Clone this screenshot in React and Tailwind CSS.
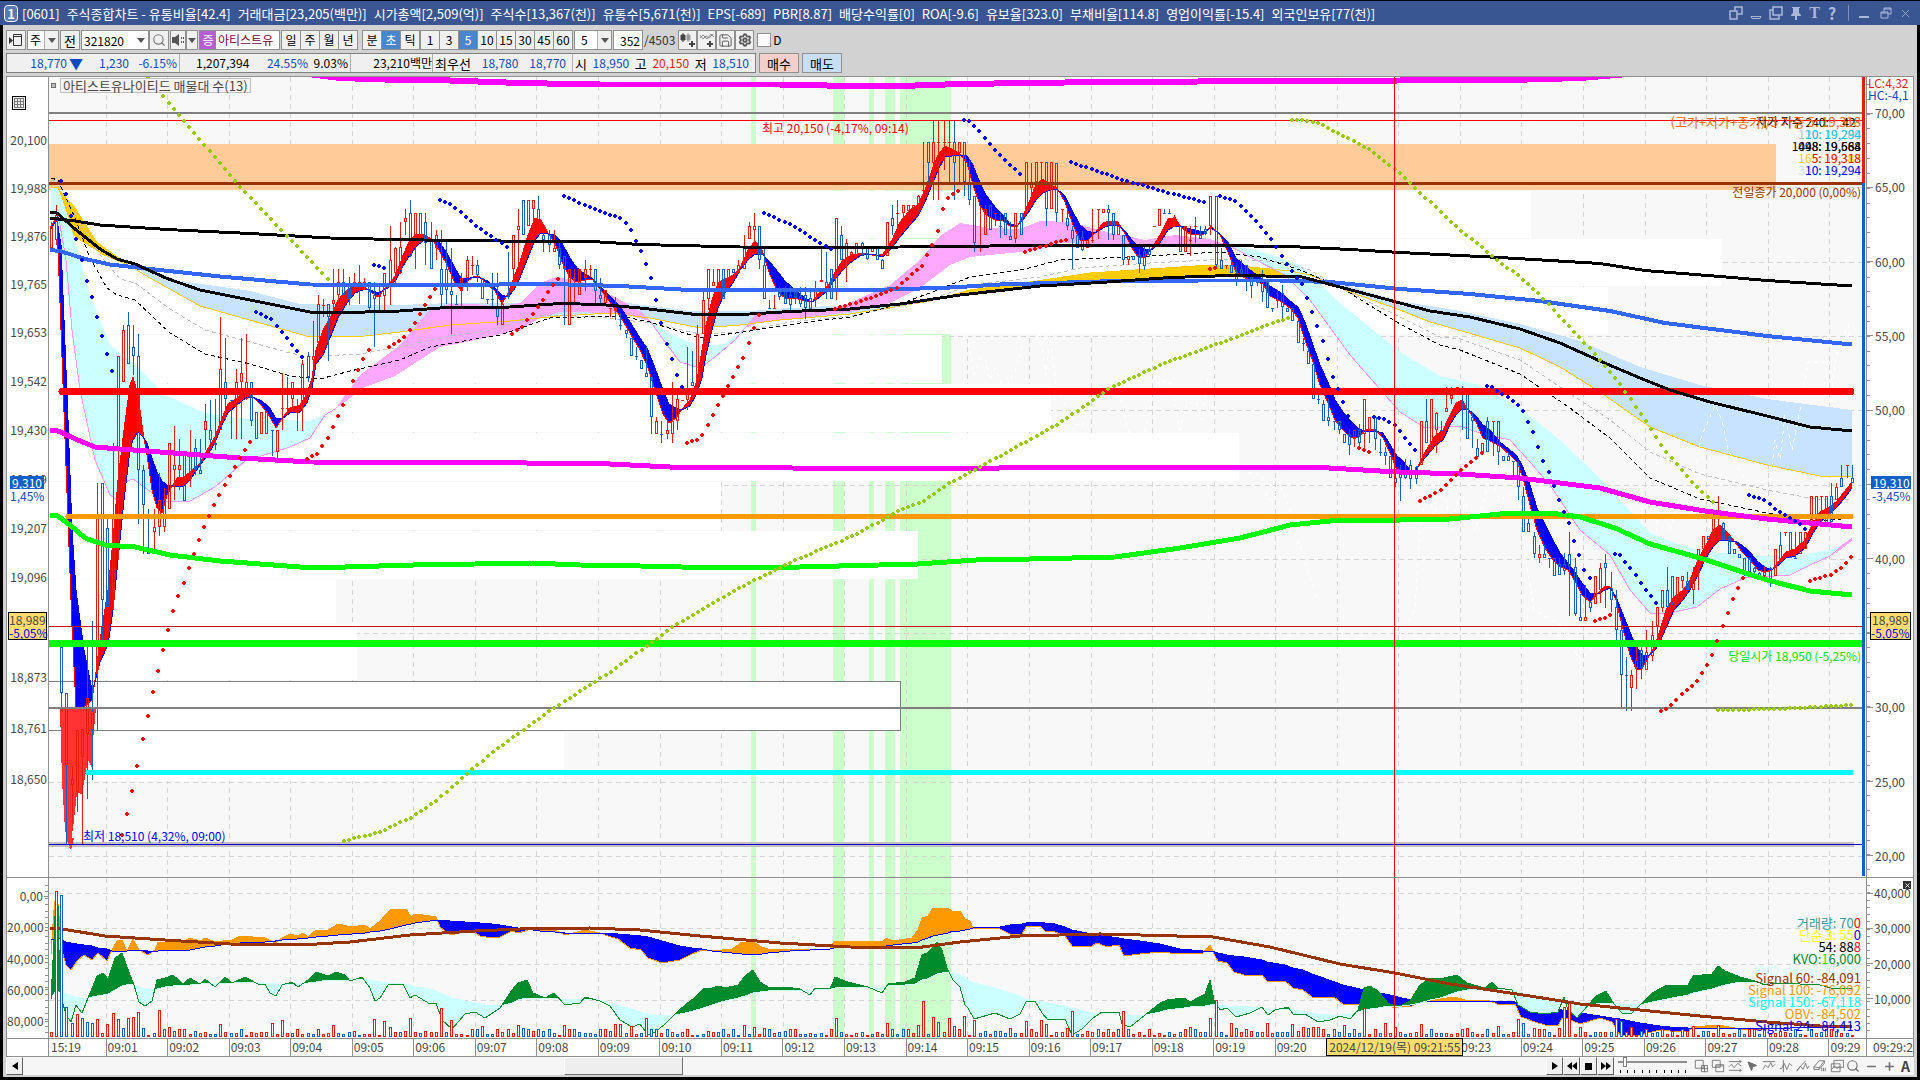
import React, { useState } from "react";
import {
  Search,
  Save,
  Settings,
  Pin,
  Minus,
  Plus,
  X,
  MousePointer2,
} from "lucide-react";

// ---------- data ----------

const stats = [
  "주식종합차트 - 유통비율[42.4]",
  "거래대금[23,205(백만)]",
  "시가총액[2,509(억)]",
  "주식수[13,367(천)]",
  "유통수[5,671(천)]",
  "EPS[-689]",
  "PBR[8.87]",
  "배당수익률[0]",
  "ROA[-9.6]",
  "유보율[323.0]",
  "부채비율[114.8]",
  "영업이익률[-15.4]",
  "외국인보유[77(천)]",
];

// rows get taller towards the low prices
const priceLabels = [
  ["20,100", "grow-[48]"], ["19,988", "grow-[48]"], ["19,876", "grow-[48]"], ["19,765", "grow-[48]"],
  ["19,653", "grow-[49]"], ["19,542", "grow-[49]"], ["19,430", "grow-[49]"], ["19,319", "grow-[49]"],
  ["19,207", "grow-[49]"], ["19,096", "grow-[50]"], ["", "grow-[50]"], ["18,873", "grow-[51]"],
  ["18,761", "grow-[51]"],
];
const indexLabels = [
  "70,00", "65,00", "60,00", "55,00", "50,00", "", "40,00", "", "30,00",
  "25,00", "20,00",
];
const obvLabels = ["0,00", "20,000", "40,000", "60,000", "80,000"];
const volLabels = ["40,000", "30,000", "20,000", "10,000"];
const minutes = Array.from(
  { length: 28 },
  (_, i) => "09:" + String(i + 1).padStart(2, "0")
);

const FIRST_X = 51;
const STEP = 5.13;
const BARS = 352;
const MINUTE = 61.564;

// price zones [x2, y1, y2]
const zones = [
  [1531, 191, 238], [1722, 239, 286], [1608, 287, 334], [942, 335, 383],
  [1051, 384, 432], [1239, 433, 481], [721, 482, 530], [918, 531, 579],
  [336, 580, 623], [357, 624, 680], [564, 732, 781],
];

const stripes = [
  [751, 5], [833, 11], [869, 5], [885, 10], [900, 51],
];

// short moving averages [x, fast, slow]
const ribbon = [
  [51,229,229],[55,218,222],[57,222,220],[61,330,245],[68,520,420],[72,626,530],[76,707,590],[84,707,650],[92,700,690],
  [95,680,682],[100,640,662],[108,590,645],[113,540,610],[118,480,560],[124,430,500],[130,385,450],[133,377,440],
  [138,395,432],[143,432,437],[147,455,443],[152,490,458],[157,508,472],[162,513,481],[167,495,485],[173,485,486],
  [178,477,486],[184,477,486],[190,472,480],[200,463,465],[207,450,456],[215,437,443],[222,418,425],[228,404,413],
  [237,398,405],[247,390,397],[252,396,397],[262,406,401],[270,417,408],[276,428,419],[283,417,418],[290,408,413],
  [300,405,412],[307,394,403],[312,378,388],[316,350,364],[323,330,355],[330,318,338],[338,300,318],[347,290,303],
  [355,286,293],[363,286,290],[368,290,289],[378,297,293],[388,285,288],[396,275,280],[403,255,266],[410,240,255],
  [417,234,246],[424,235,240],[433,240,240],[440,252,243],[447,265,253],[455,283,268],[461,290,278],[467,282,279],
  [474,276,277],[480,277,278],[488,285,281],[495,291,288],[502,304,295],[508,293,297],[514,277,290],[520,262,278],
  [527,238,260],[535,218,240],[541,220,233],[548,233,234],[555,243,235],[562,262,243],[570,278,258],[577,282,268],
  [585,280,274],[592,279,278],[600,289,286],[610,302,296],[620,316,306],[630,333,322],[640,350,338],[647,365,348],
  [655,390,368],[663,414,390],[669,423,404],[676,418,408],[682,409,410],[690,400,406],[697,380,393],[702,350,378],
  [706,325,355],[712,300,330],[718,283,308],[725,279,293],[733,275,283],[740,268,270],[748,250,260],[755,241,254],
  [762,250,254],[770,275,262],[778,292,272],[785,298,281],[795,298,290],[805,301,298],[812,302,302],[820,292,297],
  [828,286,290],[835,272,279],[843,260,270],[850,256,263],[860,253,256],[868,254,254],[876,256,255],[883,254,257],
  [892,240,248],[900,222,237],[910,210,225],[918,205,216],[925,190,202],[932,170,185],[938,155,170],[945,146,157],
  [952,149,156],[960,154,155],[967,163,156],[973,185,165],[980,205,183],[986,215,195],[995,220,207],[1003,221,215],
  [1010,226,224],[1017,227,226],[1023,215,220],[1030,200,210],[1036,184,200],[1043,179,193],[1050,185,190],
  [1057,188,189],[1065,202,196],[1073,225,212],[1080,240,225],[1087,241,231],[1095,233,233],[1103,223,228],
  [1110,221,225],[1118,222,225],[1125,234,231],[1132,248,240],[1138,257,246],[1145,257,249],[1150,251,251],
  [1160,235,243],[1168,219,230],[1175,218,226],[1182,228,226],[1190,234,229],[1204,234,232],[1211,226,228],
  [1220,235,234],[1228,252,242],[1236,272,258],[1245,278,266],[1253,281,272],[1263,284,280],[1270,296,286],
  [1280,301,292],[1290,308,301],[1298,318,307],[1305,340,322],[1313,362,345],[1320,385,365],[1328,403,382],
  [1335,420,400],[1343,430,412],[1350,437,420],[1358,438,428],[1365,430,432],[1375,429,431],[1383,438,433],
  [1391,455,446],[1397,470,456],[1404,474,462],[1410,475,470],[1416,470,470],[1425,452,458],[1435,436,446],
  [1443,430,440],[1450,415,425],[1456,403,415],[1462,400,409],[1469,411,410],[1476,422,416],[1483,438,425],
  [1490,441,430],[1500,446,442],[1510,455,450],[1517,462,456],[1523,478,467],[1530,505,485],[1537,530,508],
  [1545,548,524],[1553,560,540],[1560,567,553],[1568,570,563],[1575,581,572],[1582,595,583],[1590,602,593],
  [1598,593,594],[1605,586,590],[1610,587,588],[1616,600,597],[1622,625,612],[1630,655,632],[1636,669,646],
  [1642,669,655],[1648,658,656],[1655,645,650],[1660,630,642],[1666,610,628],[1674,597,610],[1683,590,600],
  [1690,580,590],[1698,560,575],[1706,545,558],[1713,530,547],[1720,525,540],[1728,533,541],[1735,542,541],
  [1742,552,545],[1750,560,552],[1758,570,562],[1765,572,567],[1772,570,570],[1780,560,564],[1786,552,558],
  [1795,549,556],[1805,540,548],[1812,525,535],[1820,512,522],[1828,508,516],[1836,502,508],[1844,492,499],[1852,482,488],
];

// candles read one by one [x, high, top, bottom, low, up]
const knownCandles = [
  [51,222,226,248,252,1],[56,205,215,240,245,1],[61,647,647,693,712,0],[66,693,693,766,845,0],[71,766,779,785,826,1],[76,730,730,792,812,1],[81,730,729,757,844,1],
  [87,640,698,734,799,1],[92,621,711,730,780,0],[97,483,518,670,730,1],[102,483,483,600,640,0],[107,518,528,607,640,0],
  [112,443,518,600,610,1],[117,356,356,448,560,1],[122,325,330,382,382,1],[128,312,325,364,364,0],[133,325,347,356,375,0],
  [138,334,356,470,524,0],[143,465,470,505,554,0],[148,509,549,554,554,0],[153,509,527,532,549,1],[158,473,500,527,536,1],
  [163,488,500,527,532,1],[168,443,443,509,509,1],[174,426,465,470,500,1],[179,439,465,470,490,1],[184,452,452,501,501,0],
  [189,430,452,479,487,1],[194,439,448,470,475,0],[199,439,470,474,474,0],[204,404,421,430,450,1],[210,400,430,440,443,0],
  [215,399,443,445,450,0],[220,317,369,430,430,1],[225,338,382,399,420,0],[230,400,400,400,439,0],[235,369,382,399,439,1],
  [240,338,373,382,439,1],[245,334,382,399,400,1],[251,382,382,421,426,0],[256,412,412,439,439,0],[261,412,412,434,434,1],
  [266,412,412,434,434,1],[271,430,430,430,456,0],[276,430,430,452,462,1],[281,373,408,408,430,1],[286,377,408,408,410,1],
  [292,382,382,399,412,1],[297,399,412,412,431,1],[302,360,364,408,431,1],[307,352,356,377,382,0],[312,321,356,360,369,1],
  [317,295,304,343,360,1],[322,299,305,305,317,1],[328,304,304,317,361,0],[333,269,300,304,310,1],[338,269,282,295,308,1],
  [343,269,282,295,299,0],[348,277,286,299,305,0],[353,273,282,286,290,1],[358,265,282,286,304,1],[363,278,282,285,290,1],
  [369,282,282,308,312,0],[374,282,295,299,347,0],[379,286,295,297,313,1],[384,273,273,296,313,1],[389,226,260,282,305,1],
  [394,247,248,273,287,1],[399,222,247,273,274,1],[404,209,218,222,235,1],[410,200,213,256,257,0],[415,213,213,235,269,1],
  [420,213,213,243,243,0],[425,213,222,243,265,0],[430,222,239,269,269,0],[435,230,235,248,260,1],[440,230,269,295,308,0],
  [445,239,269,290,304,0],[451,248,291,295,334,0],[456,295,304,304,305,0],[461,273,278,291,308,1],[466,256,260,278,291,1],
  [471,256,265,265,275,1],[476,260,265,275,282,0],[481,278,278,299,299,0],[486,299,299,299,304,0],[491,273,299,299,308,0],
  [497,273,308,317,325,0],[502,300,304,325,325,1],[507,252,295,297,299,0],[512,235,235,269,291,1],[517,209,226,230,269,1],
  [522,200,200,235,235,0],[528,200,200,226,226,1],[533,200,200,209,230,1],[538,196,209,235,235,0],[543,230,235,240,252,0],
  [548,230,235,245,252,0],[553,230,248,252,252,1],[558,243,248,265,269,0],[564,256,256,269,325,0],[569,269,269,325,325,1],
  [574,269,278,278,304,1],[579,269,269,295,295,1],[584,260,269,278,291,1],[589,265,269,269,278,1],[594,269,269,291,304,0],
  [599,278,295,299,304,0],[605,290,290,303,303,1],[610,308,308,308,317,1],[615,297,308,311,320,1],[620,313,325,325,330,0],
  [625,330,330,334,338,0],[630,338,338,356,356,0],[635,347,356,356,360,0],[640,360,360,369,369,0],[646,347,373,377,377,0],
  [651,377,377,417,434,0],[656,417,421,434,434,1],[661,421,434,434,443,0],[666,421,430,434,439,1],[671,382,421,434,443,1],
  [676,395,399,421,430,1],[681,400,400,400,400,1],[687,347,390,400,410,1],[692,351,382,386,386,0],[697,325,334,380,380,1],
  [702,291,300,334,334,1],[707,269,269,299,310,1],[712,269,282,286,286,1],[717,269,269,286,286,1],[723,269,269,299,299,0],
  [728,269,269,278,278,1],[733,269,269,273,273,0],[738,260,265,273,273,1],[743,235,248,269,269,1],[748,222,226,239,239,1],
  [753,213,226,230,243,1],[758,226,226,260,269,0],[764,248,265,299,299,0],[769,300,308,308,309,0],[774,295,308,308,309,1],
  [784,286,290,304,304,0],[820,247,280,282,282,1],[825,252,282,290,299,0],[830,269,269,299,299,0],[835,218,218,290,300,1],
  [841,226,235,260,260,0],[846,239,243,260,282,1],[856,243,243,256,256,1],[861,242,243,248,256,0],[866,248,248,259,260,0],
  [872,248,248,252,252,1],[877,248,248,260,260,0],[882,259,260,269,269,0],[887,222,222,256,256,1],[892,205,218,226,235,0],
  [897,200,213,213,226,1],[902,205,205,213,218,1],[907,205,205,211,218,1],[912,205,205,209,209,1],[917,195,196,205,213,1],
  [923,142,190,190,200,1],[928,142,142,163,183,0],[933,121,142,163,200,1],[938,121,142,142,200,1],[943,121,142,142,170,1],
  [948,121,142,142,182,1],[953,121,142,163,200,0],[959,142,142,153,182,1],[964,142,142,182,196,0],[969,160,182,200,205,0],
  [974,196,196,243,252,0],[979,205,205,205,252,1],[984,205,209,235,235,1],[989,205,205,230,230,0],[994,213,213,213,226,1],
  [1000,213,226,226,238,0],[1005,213,213,235,235,0],[1010,222,236,240,240,0],[1015,213,213,239,243,1],[1020,213,213,235,235,0],
  [1025,162,162,212,212,1],[1030,163,183,188,200,1],[1035,162,162,182,196,1],[1041,162,162,162,190,1],[1046,162,162,209,226,0],
  [1051,162,162,209,209,1],[1056,163,163,213,222,0],[1061,209,209,209,222,1],[1066,209,218,226,230,0],[1071,226,230,239,269,0],
  [1076,235,235,248,248,0],[1087,240,240,248,248,1],[1092,209,240,240,243,1],[1097,209,209,209,239,1],[1102,209,209,213,213,1],
  [1107,205,209,213,240,0],[1112,213,213,235,240,0],[1118,226,226,235,235,1],[1123,235,235,260,265,0],[1128,256,256,260,265,1],
  [1133,256,256,260,260,0],[1153,226,226,226,226,1],[1159,209,209,226,226,1],[1164,209,213,213,213,0],[1169,209,213,213,213,0],
  [1179,226,226,252,252,0],[1184,226,226,252,252,1],[1189,226,240,240,256,1],[1194,217,226,226,243,1],[1200,226,235,239,239,0],
  [1210,196,196,226,235,1],[1215,196,196,265,269,0],[1220,248,260,269,269,0],[1225,265,265,265,269,1],[1231,260,265,273,273,0],
  [1236,265,273,282,286,0],[1246,265,265,282,291,0],[1256,282,282,282,286,0],[1266,282,282,308,308,0],[1271,308,308,308,312,0],
  [1277,291,300,300,308,1],[1287,308,308,312,312,0],[1292,308,308,321,321,0],[1297,321,321,343,343,0],[1302,338,343,343,351,0],
  [1307,347,351,364,364,0],[1313,364,364,399,399,0],[1318,390,399,399,404,0],[1323,400,404,421,421,0],[1328,399,417,421,426,0],
  [1333,421,421,421,430,0],[1338,421,421,430,434,0],[1343,434,434,443,443,0],[1354,430,430,439,447,1],[1364,399,399,434,452,1],
  [1369,417,417,430,443,1],[1374,417,417,439,450,0],[1379,439,452,452,456,0],[1384,447,452,456,465,0],[1389,456,456,478,478,0],
  [1395,474,478,483,487,0],[1400,465,470,478,501,0],[1420,421,421,465,465,1],[1425,399,421,443,443,0],[1430,399,399,450,450,1],
  [1436,412,413,430,453,1],[1441,421,430,430,440,0],[1446,387,408,412,412,1],[1451,387,395,399,404,1],[1456,387,387,395,395,1],
  [1461,386,390,392,430,0],[1466,393,393,439,439,0],[1471,412,417,421,448,0],[1477,439,448,457,457,0],[1482,443,443,452,452,1],
  [1487,417,421,452,452,0],[1492,421,421,421,456,1],[1497,421,421,452,465,0],[1502,456,456,461,461,0],[1508,452,456,461,461,0],
  [1513,461,461,461,475,0],[1518,461,465,487,500,0],[1523,487,496,532,532,0],[1528,517,523,532,532,0],[1533,532,536,554,558,0],
  [1538,545,554,558,563,1],[1543,545,554,558,558,0],[1548,558,558,558,568,0],[1554,558,558,576,576,0],[1569,532,554,567,616,0],
  [1574,558,567,614,616,0],[1579,594,617,621,621,0],[1584,585,617,621,621,1],[1590,602,602,608,612,0],[1595,576,576,604,604,1],
  [1600,563,568,590,603,1],[1605,554,563,568,608,0],[1610,572,588,600,612,0],[1615,590,607,630,641,0],[1620,620,630,675,707,0],
  [1625,657,675,675,711,0],[1631,670,675,688,711,1],[1636,645,660,668,689,1],[1641,640,650,668,679,0],[1646,630,652,670,670,1],
  [1651,621,635,656,661,1],[1656,607,607,626,640,1],[1661,590,590,608,612,1],[1666,567,590,607,612,0],[1672,576,576,603,605,0],
  [1677,577,577,603,603,1],[1682,576,576,581,588,1],[1687,572,581,590,590,0],[1692,567,576,590,604,1],[1697,549,549,572,590,1],
  [1702,536,536,549,549,1],[1707,536,536,540,540,0],[1713,514,514,540,540,1],[1718,496,514,518,540,1],[1723,522,523,540,540,0],
  [1728,536,536,554,554,0],[1733,549,549,554,554,0],[1738,554,554,558,558,0],[1743,558,558,572,576,0],[1749,558,558,572,572,0],
  [1754,567,568,572,577,0],[1759,572,573,577,577,0],[1764,567,572,576,581,1],[1774,549,549,576,576,1],[1779,532,545,563,563,0],
  [1784,532,532,532,536,1],[1789,532,532,558,558,0],[1794,532,558,558,558,0],[1799,532,532,554,554,1],[1804,532,532,549,549,1],
  [1810,496,496,522,522,1],[1815,496,496,522,522,1],[1820,496,496,496,522,1],[1825,496,496,526,526,1],[1831,483,496,522,522,0],
  [1836,483,487,500,500,1],[1841,465,478,487,487,0],[1846,465,465,465,478,1],[1851,465,478,483,483,0],
];

// on balance volume and its signal [x, obv, signal]
const obv = [
  [51,954,940],[54,910,939],[56,893,938],[58,904,938],[62,950,940],[66,965,942],[71,970,943],[77,961,944],[84,955,945],
  [92,960,946],[98,953,948],[107,961,949],[112,950,951],[117,941,951],[122,940,952],[127,951,951],[133,939,950],
  [139,950,950],[148,955,951],[155,950,951],[158,942,951],[165,942,950],[185,941,951],[190,938,950],[200,941,948],
  [205,938,947],[215,942,946],[232,940,943],[240,936,943],[265,938,942],[275,943,941],[282,938,940],[290,934,939],
  [297,936,939],[303,933,938],[308,937,938],[316,930,937],[328,930,936],[338,924,935],[352,927,934],[365,925,933],
  [370,929,932],[380,921,931],[390,910,929],[406,909,925],[411,917,924],[415,914,923],[430,916,921],[436,917,920],
  [440,927,920],[450,935,921],[465,932,922],[474,932,922],[480,936,923],[492,938,924],[500,937,925],[512,931,927],
  [518,933,928],[525,931,929],[533,928,930],[540,930,931],[548,928,931],[555,930,932],[565,935,933],[585,930,933],
  [600,933,933],[608,936,933],[618,939,934],[630,948,935],[641,950,936],[648,958,937],[662,963,941],[680,960,946],
  [692,954,948],[702,950,949],[712,951,951],[732,949,953],[742,942,954],[753,942,954],[762,947,954],[768,949,953],
  [790,949,951],[830,949,949],[834,941,948],[882,942,947],[886,938,946],[893,941,945],[912,938,943],[918,930,942],
  [922,918,940],[928,916,938],[933,908,936],[948,908,933],[953,912,931],[960,911,931],[965,919,930],[970,921,929],
  [973,928,928],[1000,929,927],[1010,934,925],[1022,934,924],[1026,927,923],[1040,926,922],[1045,931,923],[1055,932,924],
  [1065,936,927],[1072,946,930],[1092,946,934],[1097,943,934],[1105,946,936],[1112,946,937],[1119,945,938],[1124,956,939],
  [1140,954,941],[1160,952,944],[1180,954,949],[1203,953,951],[1210,945,951],[1215,956,952],[1218,961,953],[1227,963,955],
  [1234,972,956],[1244,975,957],[1262,975,960],[1267,981,962],[1285,981,965],[1293,988,968],[1303,990,970],[1312,997,974],
  [1335,998,982],[1343,1004,985],[1360,1004,989],[1363,992,990],[1375,993,992],[1385,1002,994],[1394,1008,996],
  [1402,1006,998],[1412,1006,1000],[1425,1000,1001],[1440,999,1001],[1455,997,1001],[1465,1000,1001],[1490,1001,1001],
  [1497,1004,1001],[1515,1004,1002],[1521,1017,1003],[1535,1022,1004],[1545,1025,1006],[1558,1026,1008],[1562,1018,1010],
  [1568,1019,1010],[1580,1024,1013],[1600,1018,1016],[1612,1022,1018],[1620,1035,1019],[1640,1035,1023],[1660,1030,1026],
  [1670,1031,1027],[1688,1032,1028],[1692,1027,1028],[1718,1025,1028],[1740,1029,1029],[1767,1029,1028],[1790,1028,1028],
  [1852,1027,1027],
];

// klinger oscillator and its signal [x, kvo, signal]
const kvo = [
  [51,999,998],[54,940,994],[56,892,991],[58,905,991],[60,992,992],[62,1000,992],[66,1015,994],[71,1022,996],[76,1005,997],
  [82,1013,998],[88,998,998],[97,976,996],[103,973,995],[108,979,994],[115,958,990],[122,953,986],[130,975,984],
  [134,985,985],[139,1002,987],[145,1006,989],[152,1001,990],[157,980,989],[165,978,987],[173,975,986],[183,984,985],
  [190,978,985],[200,984,984],[205,979,983],[215,987,984],[225,977,983],[232,983,983],[245,977,982],[258,984,982],
  [265,984,983],[270,993,983],[276,996,984],[282,985,984],[292,982,984],[298,987,984],[308,980,983],[316,972,982],
  [328,976,980],[336,972,980],[345,975,980],[350,981,980],[362,977,979],[370,988,980],[375,1001,981],[380,998,982],
  [388,985,983],[403,984,984],[410,998,985],[415,995,987],[430,1004,989],[436,1003,991],[442,1020,994],[452,1029,998],
  [465,1014,1001],[475,1012,1003],[485,1018,1005],[500,1008,1006],[512,990,1003],[518,983,1000],[527,980,998],
  [533,993,998],[545,998,998],[554,993,998],[565,1005,1000],[580,1003,999],[585,997,999],[600,1001,1000],[610,1006,1003],
  [620,1020,1006],[632,1027,1009],[640,1024,1012],[648,1035,1014],[655,1032,1015],[665,1024,1016],[675,1014,1015],
  [685,1005,1013],[693,999,1011],[703,989,1008],[712,988,1005],[718,986,1003],[725,988,1001],[738,985,998],[745,976,996],
  [753,970,993],[760,982,992],[768,987,991],[785,987,990],[800,989,990],[810,995,990],[815,988,990],[830,989,989],
  [835,977,988],[848,982,987],[868,987,987],[882,993,987],[888,984,986],[905,982,985],[915,978,984],[922,955,980],
  [927,953,979],[933,947,976],[937,942,974],[942,950,973],[947,968,972],[953,980,973],[960,987,975],[965,1005,978],
  [968,1008,980],[974,1019,983],[995,1013,988],[1010,1019,993],[1020,1014,996],[1026,1002,999],[1035,1001,1001],
  [1042,1013,1002],[1048,1020,1003],[1065,1019,1006],[1072,1035,1008],[1082,1029,1011],[1093,1018,1013],[1102,1012,1013],
  [1119,1012,1013],[1122,1024,1014],[1130,1027,1015],[1145,1015,1015],[1160,1003,1012],[1167,1000,1010],[1184,998,1008],
  [1190,1002,1007],[1205,994,1006],[1210,980,1005],[1214,1000,1004],[1220,1010,1005],[1227,1008,1006],[1236,1017,1006],
  [1250,1013,1007],[1262,1007,1008],[1268,1015,1009],[1275,1010,1009],[1288,1007,1009],[1293,1014,1010],[1305,1014,1012],
  [1318,1022,1014],[1330,1020,1015],[1340,1016,1015],[1350,1019,1014],[1358,1010,1012],[1364,988,1010],[1370,986,1009],
  [1378,991,1008],[1388,1003,1006],[1395,1006,1006],[1402,1005,1006],[1410,1001,1005],[1420,985,1003],[1430,978,1000],
  [1440,979,998],[1457,975,992],[1467,983,990],[1485,988,989],[1492,982,989],[1498,988,989],[1512,990,989],[1518,1005,992],
  [1530,1012,995],[1545,1014,998],[1558,1012,1000],[1564,997,1001],[1568,1010,1002],[1577,1018,1003],[1590,1003,1004],
  [1596,996,1004],[1606,991,1003],[1614,1004,1003],[1622,1013,1004],[1632,1013,1004],[1644,1001,1004],[1652,993,1002],
  [1667,985,999],[1688,985,995],[1693,976,993],[1712,974,989],[1718,966,987],[1725,971,985],[1740,977,982],[1755,981,982],
  [1765,985,982],[1775,983,983],[1800,984,984],[1820,985,985],[1835,989,986],[1852,988,988],
];

// tall volume bars [x, top, up]
const knownVolumes = [
  [56,891,1],[61,895,0],[66,1007,0],[71,1023,0],[76,1014,1],[81,1018,0],[87,1022,0],[92,1023,0],[97,1019,1],[107,1024,1],
  [112,1013,1],[117,1019,0],[122,1028,0],[127,1018,1],[133,1017,1],[138,1012,1],[143,1028,0],[158,1010,1],[168,1027,1],
  [220,1024,1],[271,1023,1],[281,1020,1],[333,1025,1],[374,1019,1],[384,1021,1],[389,1027,0],[410,1018,1],[440,1008,1],
  [451,1020,1],[481,1026,1],[518,1025,1],[523,1028,0],[564,1025,1],[615,1024,1],[620,1024,1],[630,1026,1],[646,1018,1],
  [651,1029,0],[743,1025,1],[753,1027,1],[764,1028,1],[835,1018,1],[887,1023,1],[918,1025,1],[923,1001,1],[933,1017,1],
  [938,1022,0],[948,1018,1],[953,1026,0],[964,1016,1],[974,1020,1],[1010,1028,1],[1025,1021,1],[1041,1020,1],[1046,1024,0],
  [1066,1028,1],[1071,1011,1],[1122,1011,1],[1128,1029,0],[1190,1027,1],[1210,1018,1],[1215,1000,1],[1230,1023,1],
  [1236,1028,0],[1266,1023,1],[1292,1024,1],[1302,1027,1],[1307,1028,0],[1313,1027,1],[1318,1027,1],[1343,1025,1],
  [1364,1008,1],[1384,1023,1],[1395,1027,1],[1420,1024,1],[1466,1028,1],[1497,1026,1],[1518,1019,1],[1523,1023,0],
  [1533,1028,1],[1559,1028,1],[1564,1007,1],[1569,1003,1],[1579,1027,1],[1615,1019,1],[1620,1021,0],[1631,1027,1],
  [1646,1029,1],[1692,1026,1],[1718,1025,1],
];

const averages = [
  { color: "#ff00ff", width: 6, points: "300,73 340,78 400,80 450,80.5 520,83 600,84.5 780,84.5 850,86 900,86 960,84 1030,83 1100,82 1300,81 1400,80.5 1510,80 1580,78 1640,73" },
  { color: "#000", width: 3, points: "50,218 75,221 100,225 167,229.5 250,233.5 330,238 373,239 450,240.5 600,242 640,244.5 740,247 850,247.5 950,246.5 1030,245.5 1230,245.5 1300,247 1350,249.5 1400,252.5 1500,257.5 1600,263.5 1645,270.5 1720,276.5 1767,280.5 1852,286" },
  { color: "#3366ff", width: 4, points: "50,250 60,251 85,259 110,264.5 150,269 220,276.5 310,284.5 400,285 450,285 550,284 620,286 690,290 800,290 870,290 920,288.5 950,287.5 1000,284.5 1100,281.5 1200,280.5 1280,280.5 1330,282 1400,289 1470,294 1540,301 1610,311 1665,323 1767,336 1852,344.5" },
  { color: "#000", width: 3, points: "50,212.5 57,213 75,229 100,249 117,259 135,264 167,278.5 200,290 250,300 310,312 365,312 400,311 440,308 510,307 560,303.5 600,304.5 640,308 700,315 750,314 790,311.5 850,309 900,304 960,295 1040,286 1100,282.5 1170,277.5 1230,275.5 1300,276.5 1340,287 1400,303 1430,311 1470,317 1520,329 1560,343 1600,361 1640,378 1670,390 1710,402 1767,416 1810,427 1852,431" },
  { color: "#ff00ff", width: 5, points: "50,430 58,431 80,441 95,447 120,449 160,452 240,458 310,462 450,462.5 600,463.5 680,467.5 900,468.5 1100,467.5 1320,467.5 1380,471 1400,472 1460,474 1520,478 1600,488 1650,502 1705,511 1767,519 1852,527" },
  { color: "#00ff00", width: 5, points: "50,515 58,516 70,525 85,538 105,545 135,547 170,555 220,561 300,567 345,567 413,565 475,564 530,563 580,565 640,566 722,568 800,567 918,564 976,560 1030,559 1115,557 1180,548 1240,538 1290,525 1330,521 1400,520 1450,519 1500,514 1550,513 1580,517 1615,528 1650,544 1700,558 1767,580 1810,591 1852,595" },
];

const clouds = [
  // long band
  { color: "#c8e3ff", points: "130,262 180,281 250,291 300,304 350,305 400,305 450,303 530,303 580,302 620,302 690,311 750,311 790,308 850,305 890,304 900,306 850,314 780,320 740,325 700,328 650,318 610,313 560,316 510,321 450,325 400,332 365,336 310,337 260,323 200,306 150,278" },
  { color: "#c8e3ff", points: "1310,275 1400,301 1460,311 1520,324 1580,341 1640,367 1700,385 1767,399 1852,410 1852,477 1820,476 1767,465 1700,447 1650,427 1600,392 1560,367 1520,348 1455,329 1430,322 1400,310 1350,292" },
  { color: "#ffcc00", points: "51,213 58,213 66,222 75,237 100,253 130,265 97,242 75,207 58,188" },
  { color: "#ffcc00", points: "930,301 970,290 1030,282 1090,273 1150,269 1210,265 1250,267 1290,271 1310,275 1270,276 1230,275 1170,277 1100,282 1040,286 960,295" },
  // short band
  { color: "#ccffff", points: "51,187 58,187 66,210 75,240 90,295 110,345 133,362 165,395 205,413 250,419 310,421 335,410 325,415 310,438 290,447 245,461 215,487 190,501 167,502 155,495 133,479 125,482 117,500 110,495 95,460 80,390 72,330 60,240 51,213" },
  { color: "#ffa8ff", points: "335,409 360,375 400,345 430,309 450,304 475,304 500,307 520,303 540,283 556,277 580,281 615,297 640,311 650,321 620,313 560,312 540,318 520,330 500,334 480,339 440,347 395,376 365,387" },
  { color: "#ccffff", points: "650,321 670,334 700,346 725,344 745,328 735,340 715,357 700,368 680,362 665,342" },
  { color: "#ffa8ff", points: "745,328 757,312 800,311 840,307 890,285 920,260 940,236 960,223 990,228 1020,229 1040,221 1070,222 1110,233 1145,240 1175,235 1210,239 1230,246 1150,246 1060,243 1030,251 970,257 950,265 920,288 890,303 850,312 800,318 760,322" },
  { color: "#ccffff", points: "1230,246 1260,251 1300,265 1340,303 1400,352 1440,376 1480,385 1520,408 1560,440 1600,478 1650,533 1680,545 1710,552 1767,556 1800,555 1830,550 1840,546 1830,556 1810,565 1790,575 1745,578 1720,589 1697,607 1670,613 1650,613 1630,590 1610,555 1580,530 1550,485 1530,462 1510,440 1480,433 1459,426 1425,428 1400,412 1350,355 1310,300 1285,275 1250,257" },
  { color: "#ffa8ff", points: "1840,546 1852,538 1852,541 1836,553" },
];

const thinLines = [
  { color: "#ffcc00", points: "51,187 58,187 75,230 100,253 130,266 150,278 200,306 260,323 310,337 365,336 400,332 450,325 510,321 560,316 610,313 650,318 700,328 740,325 780,320 850,314 900,306 930,301 970,290 1030,282 1090,273 1150,269 1210,265 1250,267 1290,271 1310,275 1350,292 1400,310 1430,322 1455,329 1520,348 1560,367 1600,392 1650,427 1700,447 1767,465 1820,476 1852,477" },
  { color: "#ff99ff", points: "51,213 58,213 66,260 72,330 80,390 95,460 110,495 117,500 125,482 133,479 155,495 167,502 190,501 215,487 245,461 290,447 310,438 325,415 335,409" },
  { color: "#ff99ff", points: "650,321 665,342 680,362 700,368 715,357 735,340 745,328" },
  { color: "#ff99ff", points: "1230,246 1250,257 1285,275 1310,300 1350,355 1400,412 1425,428 1459,426 1480,433 1510,440 1530,462 1550,485 1580,530 1610,555 1630,590 1650,613 1670,613 1697,607 1720,589 1745,578 1790,575 1810,565 1830,556 1852,538" },
  { color: "#c0c0c0", dash: "4 3", points: "51,180 57,180 75,215 100,255 120,279 135,283 170,309 205,330 250,342 290,353 310,357 360,354 400,347 450,336 490,330 540,315 600,317 650,323 700,334 740,332 790,322 850,316 900,306 930,300 970,285 1040,277 1080,268 1150,263 1230,259 1280,262 1310,270 1340,288 1400,317 1440,337 1460,339 1520,360 1560,387 1610,420 1650,452 1700,474 1767,490 1820,500 1850,499" },
  { color: "#000", dash: "4 3", points: "51,178 58,180 75,218 90,258 107,288 117,295 135,300 170,333 205,354 250,364 290,376 320,379 350,371 400,360 430,347 470,340 500,335 550,318 620,316 650,322 700,338 750,331 800,323 850,317 900,304 935,291 970,277 1025,269 1060,260 1150,256 1220,252 1260,257 1300,270 1340,287 1400,324 1440,345 1460,350 1520,374 1570,408 1610,438 1650,478 1700,499 1767,513 1820,521 1852,518" },
  // previous price trace
  { color: "#fff", dash: "4 4", points: "967,335 974,375 980,357 985,360 990,380 995,368 1004,390 1015,372 1024,340 1040,335 1046,375 1050,335 1056,385 1065,405 1075,424 1082,426 1090,400 1098,384 1110,400 1120,395 1128,430 1132,440" },
  { color: "#fff", dash: "4 4", points: "1145,432 1152,400 1160,380 1172,384 1180,430 1187,402 1196,402 1202,420 1210,365 1214,430" },
  { color: "#fff", dash: "4 4", points: "1240,470 1262,475 1268,500 1274,498 1278,480 1292,515 1296,535 1306,565 1318,600" },
  { color: "#fff", dash: "4 4", points: "1400,635 1415,610 1420,530 1428,480 1434,520 1440,470 1452,530 1460,490 1475,530 1490,480 1500,500 1518,490 1526,560 1534,610 1560,625 1580,660 1600,640" },
  { color: "#fff", dash: "4 4", points: "1655,540 1660,500 1670,530 1682,485 1690,510 1700,440 1715,405 1722,420 1728,450 1745,480 1770,482 1775,440 1780,460 1785,415 1792,450 1800,410 1808,362 1825,362 1830,405 1836,355 1848,325 1852,350" },
];

const sar = [
  { color: "#99cc00", points: [[148,78],[163,96],[200,140],[245,192],[283,232],[328,279]] },
  { color: "#99cc00", points: [[344,841],[380,832],[410,818],[435,802],[490,754],[551,710],[612,671],[673,627],[735,590],[796,560],[857,534],[902,509],[925,500],[950,483],[1000,456],[1060,423],[1110,388],[1160,365],[1212,346],[1287,318]] },
  { color: "#99cc00", points: [[1292,120],[1302,120],[1318,123],[1340,134],[1370,150],[1395,169],[1415,188],[1460,230],[1500,262],[1520,277],[1540,295],[1560,317],[1580,338],[1600,360],[1620,384],[1645,420],[1665,450],[1690,480],[1713,502]] },
  { color: "#99cc00", points: [[1718,710],[1780,709],[1852,705]] },
  { color: "#0000ff", points: [[61,181],[66,193],[71,215],[76,237],[86,279],[92,298],[97,317],[102,336],[107,353],[112,371]] },
  { color: "#0000ff", points: [[256,312],[271,319],[281,331],[302,357]] },
  { color: "#0000ff", points: [[374,265],[385,268]] },
  { color: "#0000ff", points: [[440,200],[451,204],[475,225],[497,240],[507,247]] },
  { color: "#0000ff", points: [[564,196],[590,207],[622,219],[630,229],[640,249],[651,277],[656,299],[666,342],[672,360],[681,387]] },
  { color: "#0000ff", points: [[764,213],[790,224],[830,249]] },
  { color: "#0000ff", points: [[964,120],[969,121],[979,131],[994,149],[1020,174]] },
  { color: "#0000ff", points: [[1071,162],[1120,179],[1170,193],[1205,202]] },
  { color: "#0000ff", points: [[1220,196],[1236,201],[1251,216],[1271,238],[1287,265],[1302,284],[1312,311],[1323,342],[1333,377],[1343,402],[1348,416]] },
  { color: "#0000ff", points: [[1374,417],[1384,419],[1395,425],[1405,438],[1415,450]] },
  { color: "#0000ff", points: [[1487,386],[1492,387],[1507,397],[1518,405],[1523,411],[1528,422],[1533,432],[1543,460],[1549,473],[1559,501],[1569,523],[1574,540],[1584,569],[1590,579]] },
  { color: "#0000ff", points: [[1615,554],[1620,555],[1631,569],[1646,590],[1656,603]] },
  { color: "#0000ff", points: [[1749,495],[1764,500],[1779,512],[1800,524],[1805,529]] },
  { color: "#ff0000", points: [[122,835],[127,815],[133,788],[143,737],[153,691],[163,650],[174,608],[184,582],[194,553],[204,527],[215,504],[230,475],[245,450],[251,441]] },
  { color: "#ff0000", points: [[307,459],[317,454],[328,437],[343,405],[353,381],[363,360],[369,349]] },
  { color: "#ff0000", points: [[389,347],[404,338],[415,322],[425,305],[435,289]] },
  { color: "#ff0000", points: [[512,334],[522,327],[533,313],[543,300],[548,292],[558,279]] },
  { color: "#ff0000", points: [[687,443],[697,440],[702,436],[712,416],[728,386],[743,359],[753,330],[758,315]] },
  { color: "#ff0000", points: [[835,309],[870,298],[895,289],[912,274],[923,265],[928,254],[933,244],[938,230],[943,208],[948,198],[959,190]] },
  { color: "#ff0000", points: [[1025,252],[1060,241],[1066,240]] },
  { color: "#ff0000", points: [[1210,269],[1216,268]] },
  { color: "#ff0000", points: [[1359,448],[1369,452]] },
  { color: "#ff0000", points: [[1420,501],[1441,490],[1461,470],[1482,453]] },
  { color: "#ff0000", points: [[1595,621],[1605,618],[1610,615]] },
  { color: "#ff0000", points: [[1661,711],[1667,709],[1682,694],[1697,681],[1707,665],[1713,654],[1723,625],[1728,612],[1733,599],[1738,588],[1743,578]] },
  { color: "#ff0000", points: [[1810,581],[1830,575],[1841,568],[1851,557]] },
];

// ---------- helpers ----------

const noise = (n) => {
  const v = Math.sin(n * 12.9898 + 4.137) * 43758.5453;
  return v - Math.floor(v);
};

const valueAt = (rows, x, col) => {
  for (let i = 1; i < rows.length; i++) {
    if (x <= rows[i][0]) {
      const a = rows[i - 1];
      const b = rows[i];
      return a[col] + ((b[col] - a[col]) * (x - a[0])) / (b[0] - a[0] || 1);
    }
  }
  return rows[rows.length - 1][col];
};

const toPoints = (rows, col) => rows.map((r) => `${r[0]},${r[col]}`).join(" ");

// splits the area between two lines by which one is on top
const bandPaths = (rows) => {
  let over = "";
  let under = "";
  const add = (isOver, pts) => {
    const d = "M" + pts.map((p) => p.join(",")).join("L") + "Z";
    if (isOver) over += d;
    else under += d;
  };
  for (let i = 1; i < rows.length; i++) {
    const [x0, a0, b0] = rows[i - 1];
    const [x1, a1, b1] = rows[i];
    const d0 = b0 - a0;
    const d1 = b1 - a1;
    if (d0 * d1 < 0) {
      const t = d0 / (d0 - d1);
      const cx = x0 + (x1 - x0) * t;
      const cy = a0 + (a1 - a0) * t;
      add(d0 > 0, [[x0, a0], [cx, cy], [x0, b0]]);
      add(d1 > 0, [[x1, a1], [cx, cy], [x1, b1]]);
    } else {
      add(d0 + d1 > 0, [[x0, a0], [x1, a1], [x1, b1], [x0, b0]]);
    }
  }
  return { over, under };
};

const indexOf = (x) => Math.round((x - FIRST_X) / STEP);

const candleMap = new Map(knownCandles.map((c) => [indexOf(c[0]), c]));
const candles = Array.from({ length: BARS }, (_, i) => {
  const x = Math.round(FIRST_X + i * STEP);
  const known = candleMap.get(i);
  if (known) return [x, ...known.slice(1)];
  const mid = valueAt(ribbon, x, 1);
  const body = 3 + noise(i) * 12;
  const top = Math.round(mid - body / 2 + (noise(i + 500) - 0.5) * 8);
  return [
    x,
    Math.round(top - noise(i + 90) * 12),
    top,
    Math.round(top + body),
    Math.round(top + body + noise(i + 200) * 12),
    valueAt(ribbon, x, 1) < valueAt(ribbon, x, 2) ? 1 : 0,
  ];
});

const volumeMap = new Map(knownVolumes.map((v) => [indexOf(v[0]), v]));
const volumes = Array.from({ length: BARS }, (_, i) => {
  const x = Math.round(FIRST_X + i * STEP);
  const known = volumeMap.get(i);
  if (known) return [x, known[1], known[2]];
  const h = noise(i + 7) > 0.8 ? 7 : noise(i + 31) * 4 + 1;
  return [x, Math.round(1036 - h), noise(i + 60) > 0.45 ? 1 : 0];
});

const dots = sar.flatMap(({ color, points }) => {
  const out = [];
  const last = points[points.length - 1][0];
  for (let x = points[0][0]; x <= last + 1; x += STEP) {
    out.push({ color, x: Math.round(x), y: Math.round(valueAt(points, x, 1)) });
  }
  return out;
});

const RED = "#e81c0c";
const BLUE = "#1560c8";

// ---------- charts ----------

function MinuteGrid({ y1, y2 }) {
  return minutes.concat("09:29").map((m, i) => {
    const x = Math.round(105.5 + i * MINUTE);
    return (
      <line key={m} x1={x} x2={x} y1={y1} y2={y2} stroke="#d4d4d4" strokeDasharray="5 4" />
    );
  });
}

function Stripes({ y, height }) {
  return stripes.map(([x, w]) => (
    <rect key={x} x={x} y={y} width={w} height={height} fill="#ccffcc" />
  ));
}

function PriceChart() {
  const band = bandPaths(ribbon);
  return (
    <svg
      viewBox="49 77 1817 800"
      preserveAspectRatio="none"
      className="absolute inset-0 size-full text-xs"
      shapeRendering="crispEdges"
      role="img"
      aria-label="가격 차트"
    >
      <rect x="49" y="77" width="1817" height="800" fill="#f8f8f8" />
      <Stripes y={77} height={800} />
      <MinuteGrid y1={77} y2={877} />
      {indexLabels.map((l, i) => (
        <line key={i} x1="49" x2="1862" y1={Math.round(113 + i * 74.3)} y2={Math.round(113 + i * 74.3)} stroke="#d4d4d4" strokeDasharray="5 4" />
      ))}
      {zones.map(([x2, y1, y2]) => (
        <rect key={y1} x="49" y={y1} width={x2 - 49} height={y2 - y1} fill="#fff" />
      ))}
      <rect x="49" y="144" width="1727" height="46" fill="#ffcc99" />
      <rect x="40" y="681" width="860" height="49" fill="#fff" stroke="#808080" />

      {clouds.map((c, i) => (
        <polygon key={i} points={c.points} fill={c.color} />
      ))}
      {thinLines.map((l, i) => (
        <polyline key={i} points={l.points} fill="none" stroke={l.color} strokeDasharray={l.dash} />
      ))}

      <path d={band.under} fill="#0000ff" />
      <path d={band.over} fill="#ff0000" />
      <polyline points={toPoints(ribbon, 1)} fill="none" stroke="#ff0000" />
      <polyline points={toPoints(ribbon, 2)} fill="none" stroke="#0000ff" />
      <polygon points="60,708 62,780 65,830 70,850 74,820 77,793 82,794 88,760 92,768 93,740 96,708" fill="#ff3333" />
      <line x1="49" x2="1854" y1="844" y2="844" stroke="#c0c0c0" strokeWidth="5" />
      <polygon points="66,838 74,838 71,850" fill="#ff3333" />

      {candles.map(([x, hi, top, bottom, lo, up]) => (
        <g key={x} stroke={up ? RED : BLUE} fill="none">
          <line x1={x + 0.5} x2={x + 0.5} y1={hi} y2={top} />
          <line x1={x + 0.5} x2={x + 0.5} y1={bottom} y2={lo} />
          {bottom - top > 1 ? (
            <rect x={x - 0.5} y={top + 0.5} width="2" height={bottom - top - 1} />
          ) : (
            <line x1={x - 1} x2={x + 2} y1={top + 0.5} y2={top + 0.5} />
          )}
        </g>
      ))}

      <line x1="49" x2="1862" y1="113" y2="113" stroke="#808080" strokeWidth="2" />
      <line x1="49" x2="1862" y1="120.5" y2="120.5" stroke="#ff0000" />
      <line x1="49" x2="1862" y1="183.5" y2="183.5" stroke="#993300" strokeWidth="3" />
      <line x1="62" x2="1851" y1="391.5" y2="391.5" stroke="#ff0000" strokeWidth="7" strokeLinecap="round" />
      <line x1="68" x2="1851" y1="516.5" y2="516.5" stroke="#ff9900" strokeWidth="5" strokeLinecap="round" />
      <line x1="49" x2="1862" y1="626.5" y2="626.5" stroke="#cc1414" />
      <line x1="49" x2="1862" y1="643.5" y2="643.5" stroke="#00ff00" strokeWidth="7" />
      <line x1="49" x2="1862" y1="708" y2="708" stroke="#808080" strokeWidth="2" />
      <line x1="88" x2="1851" y1="772.5" y2="772.5" stroke="#00ffff" strokeWidth="5" strokeLinecap="round" />
      <line x1="49" x2="1862" y1="844.5" y2="844.5" stroke="#0000cc" />

      {averages.map((a, i) => (
        <polyline key={i} points={a.points} fill="none" stroke={a.color} strokeWidth={a.width} strokeLinejoin="round" />
      ))}
      {dots.map((d) => (
        <path key={d.color + d.x + "-" + d.y} d={`M${d.x - 1},${d.y - 2}h2v1h1v2h-1v1h-2v-1h-1v-2h1z`} fill={d.color} />
      ))}

      <text x="762" y="133" fill="#ff0000">최고 20,150 (-4,17%, 09:14)</text>
      <text x="83" y="841" fill="#0000ff">최저 18,510 (4,32%, 09:00)</text>
      <g textAnchor="end">
        <text x="1861" y="127" fill="#000">저가 지수 240: &#160;&#160;&#160;&#160;42&#160;&#160;</text>
        <text x="1861" y="127" fill="#ff6600" className="text-[13px]">(고가+저가+종가)/3 가중 5: 19,318</text>
        <text x="1861" y="139" fill="#c0c0c0">120: 19,280</text>
        <text x="1861" y="139" fill="#00ccff">10: 19,294</text>
        <text x="1861" y="151" fill="#000">1098: 19,568</text>
        <text x="1861" y="151" fill="#000">448: 19,684</text>
        <text x="1861" y="163" fill="#ffcc00">165: 19,388</text>
        <text x="1861" y="163" fill="#ff0000">5: 19,318</text>
        <text x="1861" y="175" fill="#c8e3ff">330: 19,420</text>
        <text x="1861" y="175" fill="#0000ff">10: 19,294</text>
        <text x="1861" y="197" fill="#993300">전일종가 20,000 (0,00%)</text>
        <text x="1861" y="661" fill="#00e600">당일시가 18,950 (-5,25%)</text>
      </g>

      <line x1="1863.5" x2="1863.5" y1="77" y2="183" stroke={RED} strokeWidth="3" />
      <line x1="1863.5" x2="1863.5" y1="183" y2="876" stroke={BLUE} strokeWidth="3" />
      <line x1="1394.5" x2="1394.5" y1="77" y2="877" stroke="#ff0000" />
    </svg>
  );
}

function VolumeChart() {
  const o = bandPaths(obv);
  const k = bandPaths(kvo);
  return (
    <svg
      viewBox="49 878 1817 160"
      preserveAspectRatio="none"
      className="absolute inset-0 size-full text-[13px]"
      shapeRendering="crispEdges"
      role="img"
      aria-label="거래량 차트"
    >
      <rect x="49" y="878" width="1817" height="160" fill="#f8f8f8" />
      <Stripes y={878} height={160} />
      <MinuteGrid y1={878} y2={1038} />
      {[893.5, 928.5, 964.5, 1000.5].map((y) => (
        <line key={y} x1="49" x2="1866" y1={y} y2={y} stroke="#d4d4d4" strokeDasharray="5 4" />
      ))}
      <path d={o.over} fill="#ff9900" />
      <path d={o.under} fill="#0000ff" />
      <polyline points={toPoints(obv, 1)} fill="none" stroke="#ff9900" />
      <polyline points={toPoints(obv, 2)} fill="none" stroke="#0000ff" />
      <path d={k.under} fill="#ccffff" />
      <path d={k.over} fill="#008c2c" />
      <polyline points={toPoints(kvo, 2)} fill="none" stroke="#ccffff" />
      <polyline points={toPoints(kvo, 1)} fill="none" stroke="#008c2c" />
      <polyline
        points="50,928 62,929 105,936 165,940 230,944 300,945 350,942 410,935 475,931 520,929 590,928 640,930 700,936 780,943 850,947 915,948 960,942 1020,936 1100,934 1140,935 1213,937 1270,947 1340,964 1395,973 1450,984 1530,996 1580,1004 1640,1010 1700,1016 1767,1022 1820,1026 1852,1027"
        fill="none"
        stroke="#993300"
        strokeWidth="3"
      />
      {volumes.map(([x, top, up]) => (
        <rect key={x} x={x - 0.5} y={top + 0.5} width="2" height={Math.max(1036 - top, 1)} fill="#f8f8f8" stroke={up ? RED : BLUE} />
      ))}
      <g textAnchor="end">
        <text x="1861" y="928" fill="#339999">거래량: 70<tspan fill="#ff0000">0</tspan></text>
        <text x="1861" y="940" fill="#ffff00">단순 3: 55<tspan fill="#0000ff">0</tspan></text>
        <text x="1861" y="952" fill="#000">54: 88<tspan fill="#ff0033">8</tspan></text>
        <text x="1861" y="964" fill="#008c2c">KVO:<tspan fill="#00ff00">1</tspan>6,000</text>
        <text x="1861" y="976" fill="#ccffff">KVO signal:27,836</text>
        <text x="1861" y="983" fill="#993300">Signal 60: -84,091</text>
        <text x="1861" y="995" fill="#ff9900">Signal 100: -76,092</text>
        <text x="1861" y="1007" fill="#00ffff">Signal 150: -67,118</text>
        <text x="1861" y="1019" fill="#ff9900">OBV: -84,502</text>
        <text x="1861" y="1031" fill="#0000ff">Signal 24: -84,413</text>
      </g>
      <line x1="1394.5" x2="1394.5" y1="878" y2="1038" stroke="#ff0000" />
    </svg>
  );
}

function Ticks({ count, height }) {
  return (
    <svg
      viewBox={`0 0 3 ${height}`}
      preserveAspectRatio="none"
      className="absolute inset-y-0 h-full w-[3px]"
      shapeRendering="crispEdges"
      aria-hidden="true"
    >
      {Array.from({ length: count }, (_, i) => {
        const y = Math.round((i * height) / count) + 7;
        return <line key={i} x1="0" x2="3" y1={y + 0.5} y2={y + 0.5} stroke="#909090" />;
      })}
    </svg>
  );
}

// ---------- toolbar parts ----------

const btn =
  "flex h-5 items-center justify-center border border-[#909090] bg-[#f0f0f0] text-black";

function Group({ items, value, onPick }) {
  return (
    <div className="flex">
      {items.map((t) => (
        <button
          key={t}
          type="button"
          onClick={() => onPick && onPick(t)}
          className={
            "-mr-px flex h-5 w-5 items-center justify-center border border-[#909090] " +
            (value === t ? "bg-[#4a86cc] text-white" : "bg-[#f0f0f0] text-black")
          }
        >
          {t}
        </button>
      ))}
    </div>
  );
}

function Arrow() {
  return (
    <svg viewBox="0 0 8 5" className="h-[5px] w-2" aria-hidden="true">
      <path d="M0 0h8L4 5z" fill="#555" />
    </svg>
  );
}

function DropDown({ label, options, className }) {
  return (
    <label className={"relative flex h-5 border border-[#909090] bg-white " + className}>
      <select aria-label={label} className="w-full appearance-none bg-transparent pl-0.5 outline-none">
        {options.map((o) => (
          <option key={o}>{o}</option>
        ))}
      </select>
      <span className="pointer-events-none absolute inset-y-0 right-0 flex w-3.5 items-center justify-center border-l border-[#b0b0b0] bg-[#f0f0f0]">
        <Arrow />
      </span>
    </label>
  );
}

function TitleBar() {
  return (
    <header className="flex h-6 items-center bg-[#3a5692] pr-2 pl-1 text-[13px] text-white">
      <span className="mr-1 flex h-[17px] w-3.5 items-center justify-center rounded-sm border border-white bg-[#5a78b4] font-bold">
        1
      </span>
      <h1 className="flex gap-[7px] whitespace-pre">
        <span>[0601]</span>
        {stats.map((s) => (
          <span key={s}>{s}</span>
        ))}
      </h1>
      <div className="ml-auto flex items-center gap-1.5 text-[#aab8d8]">
        <button type="button" aria-label="새 창">
          <svg viewBox="0 0 14 14" className="size-3.5" fill="none" stroke="currentColor" strokeWidth="1.5">
            <path d="M1 5h7v8H1zM6 5V1h7v7H8" />
          </svg>
        </button>
        <button type="button" aria-label="접기">
          <svg viewBox="0 0 14 14" className="size-3.5" fill="none" stroke="currentColor">
            <path d="M2 10.5h10l-1 2H3z" />
          </svg>
        </button>
        <button type="button" aria-label="복사">
          <svg viewBox="0 0 14 14" className="size-3.5" fill="none" stroke="currentColor" strokeWidth="1.5">
            <path d="M4 1h9v8H4zM4 4H1v9h9V9" />
          </svg>
        </button>
        <button type="button" aria-label="고정">
          <svg viewBox="0 0 14 14" className="size-3.5" fill="currentColor">
            <path d="M3 1h8v1h-1v5l2 2v1H8v4H6v-4H2V9l2-2V2H3z" />
          </svg>
        </button>
        <button type="button" className="font-['Liberation_Serif',serif] text-base leading-4 font-bold">T</button>
        <button type="button" className="w-3 text-base leading-4 font-bold">?</button>
        <span className="mx-1 h-4 w-px bg-[#8090b8]" />
        <button type="button" aria-label="최소화" className="flex size-3.5 items-end pb-0.5">
          <span className="h-0.5 w-2.5 bg-current" />
        </button>
        <button type="button" aria-label="이전 크기">
          <svg viewBox="0 0 14 14" className="size-3.5" fill="none" stroke="currentColor">
            <path d="M2 6h7v6H2zM2 7h7M5 6V2h7v6H9M5 3h7" />
          </svg>
        </button>
        <button type="button" aria-label="닫기">
          <X size={13} strokeWidth={1.5} />
        </button>
      </div>
    </header>
  );
}

function ToolBar() {
  const [unit, setUnit] = useState("초");
  const [size, setSize] = useState("5");
  return (
    <div className="flex items-center gap-px text-xs leading-none">
      <button type="button" aria-label="목록" className={btn + " w-5"}>
        <svg viewBox="0 0 16 16" className="size-4" fill="none" stroke="#333" aria-hidden="true">
          <path d="M5.5 2.5h8v11h-8zM5.5 4.5h8" />
          <path d="M1 5v7l4-3.5z" fill="#333" stroke="none" />
        </svg>
      </button>
      <DropDown label="종류" options={["주"]} className="w-8" />
      <button type="button" className={btn + " w-5 text-[13px]"}>전</button>
      <div className="flex">
        <label className="flex h-5 border border-[#909090] bg-white">
          <input aria-label="종목코드" defaultValue="321820" className="w-13 px-0.5 outline-none" />
          <span className="flex w-3.5 items-center justify-center"><Arrow /></span>
        </label>
        <button type="button" aria-label="종목 검색" className={btn + " w-5"}>
          <Search size={14} color="#777" />
        </button>
      </div>
      <div className="flex">
        <button type="button" aria-label="음성" className={btn + " w-4"}>
          <svg viewBox="0 0 14 14" className="size-3.5" fill="#555" aria-hidden="true">
            <path d="M1 4h3l4-3v12l-4-3H1zM10 4h1v2h-1zM10 8h1v2h-1zM12 4h1v2h-1zM12 8h1v2h-1z" />
          </svg>
        </button>
        <button type="button" aria-label="음성 설정" className={btn + " w-3"}><Arrow /></button>
      </div>
      <div className="flex h-5 w-[81px] items-center gap-0.5 overflow-hidden border border-[#909090] bg-white text-xs whitespace-nowrap text-[#800040]">
        <span className="flex h-full w-4 shrink-0 items-center justify-center bg-[#b45fd0] text-white">증</span>
        아티스트유
      </div>
      <Group items={["일", "주", "월", "년"]} />
      <div className="ml-1">
        <Group items={["분", "초", "틱"]} value={unit} onPick={setUnit} />
      </div>
      <Group items={["1", "3", "5", "10", "15", "30", "45", "60"]} value={size} onPick={setSize} />
      <div className="ml-px">
        <DropDown label="주기" options={["5"]} className="w-[38px] pl-1" />
      </div>
      <input aria-label="봉 개수" defaultValue="352" className="h-5 w-[30px] border border-[#909090] bg-white pr-0.5 text-right" />
      <span className="text-[#333]">/4503</span>
      <div className="ml-0.5 flex">
        <button type="button" aria-label="차트 추가" className={btn + " w-[19px]"}>
          <svg viewBox="0 0 16 16" className="size-4" aria-hidden="true">
            <path d="M3 1v9M1 3h4v5H1z" stroke="#444" fill="#444" />
            <path d="M8 1v9M7 3h3v5H7z" stroke="#999" fill="#999" />
            <path d="M12 9v6M9 12h6" stroke="#444" strokeWidth="2" />
          </svg>
        </button>
        <button type="button" aria-label="지표 추가" className={btn + " w-[19px]"}>
          <svg viewBox="0 0 16 16" className="size-4" fill="none" aria-hidden="true">
            <path d="M1 6l3-3 4 4 4-5 3 3M1 3l3 4 3-3 3 2 4-4" stroke="#777" strokeWidth=".8" />
            <path d="M11 9v6M8 12h6" stroke="#444" strokeWidth="2" />
          </svg>
        </button>
        <button type="button" aria-label="저장" className={btn + " w-[19px]"}>
          <Save size={15} color="#555" strokeWidth={1.5} />
        </button>
        <button type="button" aria-label="설정" className={btn + " w-[19px]"}>
          <Settings size={14} color="#555" strokeWidth={3} />
        </button>
      </div>
      <label className="ml-0.5 flex items-center gap-0.5">
        <input type="checkbox" className="size-3.5 appearance-none border border-[#909090] bg-white" />
        D
      </label>
    </div>
  );
}

function QuoteBar() {
  return (
    <div className="flex items-center gap-[3px] text-xs leading-none">
      <div className="flex h-5 w-[750px] items-stretch border border-[#808080] bg-[#f0f0f0] text-[#1048c0] [&>div]:flex [&>div]:items-center [&>div]:border-[#b0b0b0] [&>div+div]:border-l">
        <div className="w-[172px]">
          <span className="w-[60px] text-right">18,770</span>
          <span className="ml-0.5 text-sm leading-none">▼</span>
          <span className="ml-auto">1,230</span>
          <span className="mr-0.5 w-12 text-right">-6.15%</span>
        </div>
        <div className="w-[171px] justify-between pr-0.5 pl-4">
          <span className="text-black">1,207,394</span>
          <span className="pl-3">24.55%</span>
          <span className="text-black">9.03%</span>
        </div>
        <div className="w-[82px] justify-end text-black">23,210백만</div>
        <div className="w-[140px] justify-between pr-1.5 pl-0.5">
          <span className="text-[13px] text-black">최우선</span>
          <span>18,780</span>
          <span>18,770</span>
        </div>
        <div className="flex-1 justify-between pr-1.5 pl-0.5">
          <span className="text-[13px] text-black">시</span>
          <span>18,950</span>
          <span className="text-[13px] text-black">고</span>
          <span className="text-[#e81c0c]">20,150</span>
          <span className="text-[13px] text-black">저</span>
          <span>18,510</span>
        </div>
      </div>
      <button type="button" className="h-5 w-10 border border-[#909090] bg-[#f4d0cc] text-[13px] text-black">매수</button>
      <button type="button" className="h-5 w-10 border border-[#909090] bg-[#c8def4] text-[13px] text-black">매도</button>
    </div>
  );
}

const toolIcons = [
  ["새 차트", "M1.5 1.5h9v9h-9zM8.5 7.5h7v7h-7zM12 7v8M8 11h8"],
  ["겹침", "M1.5 1.5h9v8h-9zM5.5 6.5h9v8h-9zM5.5 8h9"],
  ["구간", "M1 3h14M1 13h14M1 9l3-3 3 4 4-5 4 3M13 1l2 2-2 2M13 11l2 2-2 2"],
  ["십자선", ""],
  ["수평선", "M1 3h14M1 12l3-5 3 3 3-6 2 5 3-3"],
  ["수직선", "M5 1v14M1 11h2l3-6 3 7 3-7 3 3"],
  ["추세선", "M1 13L11 2M1 14l4-6 3 4 3-7 2 6 2-3"],
  ["지우개", "M1 9l6-7h6l-6 8zM1 9v3h6l6-7V2M7 10v2M10 10v4M12 10v4M14 10v4"],
  ["그림", "M4.5 1.5h11v8h-11zM1.5 5.5h10v9h-10zM2 12l3-4 3 3 3-3"],
];

function BottomBar() {
  const ctl =
    "flex h-[18px] w-[17px] items-center justify-center border border-r-[#606060] border-b-[#606060] border-t-white border-l-white bg-[#f0f0f0]";
  return (
    <footer className="flex h-[18px] items-center bg-[#f6f6f6]">
      <button type="button" aria-label="왼쪽" className={ctl}>
        <svg viewBox="0 0 6 8" className="h-2 w-1.5"><path d="M6 0v8L0 4z" /></svg>
      </button>
      <div className="relative h-full flex-1 bg-[#f6f6f6]">
        <div className="absolute inset-y-0 left-[35.5%] w-[119px] border border-t-white border-r-[#707070] border-b-[#707070] border-l-white bg-[#eee]" />
      </div>
      <button type="button" aria-label="재생" className={ctl}>
        <svg viewBox="0 0 6 8" className="h-2 w-1.5"><path d="M0 0v8l6-4z" /></svg>
      </button>
      <button type="button" aria-label="뒤로" className={ctl}>
        <svg viewBox="0 0 10 8" className="h-2 w-2.5"><path d="M5 0v8L0 4zM10 0v8L5 4z" /></svg>
      </button>
      <button type="button" aria-label="정지" className={ctl}>
        <span className="size-[7px] bg-black" />
      </button>
      <button type="button" aria-label="앞으로" className={ctl}>
        <svg viewBox="0 0 10 8" className="h-2 w-2.5"><path d="M0 0v8l5-4zM5 0v8l5-4z" /></svg>
      </button>
      <label className="relative mr-1.5 ml-1 h-full w-[69px]">
        <input
          type="range"
          aria-label="속도"
          defaultValue="8"
          className="absolute inset-x-0 top-1 h-0.5 w-full appearance-none bg-[#909090] [&::-webkit-slider-thumb]:h-2.5 [&::-webkit-slider-thumb]:w-1 [&::-webkit-slider-thumb]:appearance-none [&::-webkit-slider-thumb]:border [&::-webkit-slider-thumb]:border-[#808080] [&::-webkit-slider-thumb]:bg-white"
        />
        <svg viewBox="0 0 70 3" className="absolute bottom-0.5 h-[3px] w-full" shapeRendering="crispEdges" aria-hidden="true">
          <path d="M3 0v3M10 0v3M17 0v3M25 0v3M32 0v3M39 0v3M47 0v3M54 0v3M61 0v3M68 0v3" stroke="#000" />
        </svg>
      </label>
      <div className="flex items-center gap-px text-[#707070]">
        {toolIcons.map(([name, d]) => (
          <button key={name} type="button" aria-label={name} className={"flex h-[17px] w-4 items-center justify-center " + (d ? "" : "bg-white")}>
            {d ? (
              <svg viewBox="0 0 16 16" className="size-3.5" fill="none" stroke="currentColor"><path d={d} /></svg>
            ) : (
              <MousePointer2 size={12} fill="currentColor" />
            )}
          </button>
        ))}
        <button type="button" aria-label="확대"><Search size={14} /></button>
        <button type="button" aria-label="줄이기" className="ml-1"><Minus size={13} strokeWidth={3} /></button>
        <button type="button" aria-label="늘리기" className="ml-1"><Plus size={13} strokeWidth={3} /></button>
        <button type="button" className="mx-1 text-sm leading-4 font-bold text-[#444]">A</button>
      </div>
    </footer>
  );
}

// ---------- page ----------

export default function App() {
  return (
    <div className="flex min-h-screen flex-col bg-black pt-px pb-[3px] font-['Noto_Sans_CJK_KR',sans-serif] leading-none">
      <TitleBar />
      <main className="mr-[3px] ml-[3px] flex flex-1 flex-col bg-[#d2d2d2]">
        <div className="flex flex-col gap-[3px] px-[3px] pt-[5px] pb-[3px]">
          <ToolBar />
          <QuoteBar />
        </div>

        <section className="mx-[3px] grid flex-1 grid-cols-[42px_1fr_47px] grid-rows-[1fr_161px_18px] border border-[#909090] bg-white text-xs text-[#484848]">
          <div className="relative flex flex-col border-r border-[#909090] pt-[56px] pr-px pb-[91px] text-right">
            {priceLabels.map(([p, grow], i) => (
              <span key={i} className={"basis-0 leading-[14px] " + grow}>{p}</span>
            ))}
            <span className="leading-[14px]">18,650</span>
            <button type="button" aria-label="표 보기" className="absolute top-[19px] left-[5px] size-3.5">
              <svg viewBox="0 0 14 14" className="size-3.5" fill="#eee" shapeRendering="crispEdges">
                <rect x="0.5" y="0.5" width="13" height="13" stroke="#000" />
                <path d="M2.5 2.5h9v9h-9zM2.5 5.5h9M2.5 8.5h9M5.5 2.5v9M8.5 2.5v9" stroke="#777" />
              </svg>
            </button>
            <div className="absolute top-[49.9%] left-[3px] w-[34px] text-left leading-[13px] text-[#1048c0]">
              <div className="bg-[#1060c8] pl-0.5 text-white">9,310</div>
              <div className="bg-white">1,45%</div>
            </div>
            <div className="absolute top-[66.9%] left-px w-[39px] border border-black bg-[#ffdc70] text-left leading-[13px]">
              <div>18,989</div>
              <div className="text-[#0000ff]">-5,05%</div>
            </div>
          </div>

          <div className="relative min-w-0 overflow-hidden">
            <PriceChart />
            <div className="absolute top-px left-[2px] flex items-center gap-1 text-[13px] leading-none">
              <span className="size-[5px] border border-[#707070] bg-[#bbb]" />
              <span className="border border-[#c0c0c0] bg-[#f4f4f4] px-0.5 leading-[13px]">
                아티스트유나이티드 매물대 수(13)
              </span>
            </div>
          </div>

          <div className="relative flex flex-col justify-between overflow-hidden border-l border-[#909090] pt-[29px] pb-[14px]">
            <Ticks count={54} height={800} />
            {indexLabels.map((p, i) => (
              <span key={i} className="flex h-3.5 items-center gap-0.5 leading-[14px]">
                <i className="h-px w-1.5 bg-[#909090]" />
                {p}
              </span>
            ))}
            <div className="absolute top-0 left-px leading-3 whitespace-nowrap">
              <div className="text-[#e81c0c]">LC:4,32</div>
              <div className="text-[#1048c0]">HC:-4,1</div>
            </div>
            <div className="absolute top-[49.9%] left-1 w-10 bg-white text-left leading-[13px] text-[#1048c0]">
              <div className="bg-[#1060c8] pl-0.5 text-white">19,310</div>
              <div className="pl-px">-3,45%</div>
            </div>
            <div className="absolute top-[66.9%] left-[3px] w-[41px] border border-black bg-[#ffdc70] text-left leading-[13px]">
              <div className="pl-px">18,989</div>
              <div className="text-[#0000ff]">-5,05%</div>
            </div>
          </div>

          <div className="relative flex flex-col justify-between border-t border-r border-[#909090] pt-[11px] pb-[10px]">
            {obvLabels.map((p) => (
              <span key={p} className="flex items-center justify-end gap-px leading-[14px]">
                {p}
                <i className="h-px w-1 bg-[#909090]" />
              </span>
            ))}
            <div className="absolute inset-y-0 right-[3px]"><Ticks count={25} height={160} /></div>
          </div>
          <div className="relative min-w-0 border-t border-[#909090]">
            <div className="relative h-full"><VolumeChart /></div>
          </div>
          <div className="relative flex flex-col justify-between border-t border-l border-[#909090] pt-[8px] pb-[32px]">
            <Ticks count={22} height={160} />
            {volLabels.map((p) => (
              <span key={p} className="flex items-center gap-px leading-[14px]">
                <i className="h-px w-1.5 bg-[#909090]" />
                {p}
              </span>
            ))}
            <button type="button" aria-label="패널 닫기" className="absolute top-[3px] right-0.5 flex size-2 items-center justify-center bg-[#333] text-white">
              <X size={7} strokeWidth={3} />
            </button>
          </div>

          <div className="border-t border-r border-[#909090]" />
          <div className="relative flex min-w-0 border-t border-[#909090] leading-4">
            <span className="min-w-0 grow-[565] basis-0 pl-0.5">15:19</span>
            {minutes.map((m) => (
              <span key={m} className="min-w-0 grow-[616] basis-0 border-l border-[#909090] pl-px">
                {m === "09:21" || m === "09:22" ? "" : m}
              </span>
            ))}
            <span className="min-w-0 grow-[367] basis-0 border-l border-[#909090] pl-px">09:29</span>
            <div className="absolute -top-px left-[70.3%] w-[137px] border border-black bg-[#ffdc70] text-center leading-4 whitespace-nowrap">
              2024/12/19(목) 09:21:55
            </div>
          </div>
          <div className="overflow-hidden border-t border-l border-[#909090] pl-1.5 leading-4">09:29:2</div>
        </section>

        <div className="mx-[3px] pb-0.5">
          <BottomBar />
        </div>
      </main>
    </div>
  );
}
